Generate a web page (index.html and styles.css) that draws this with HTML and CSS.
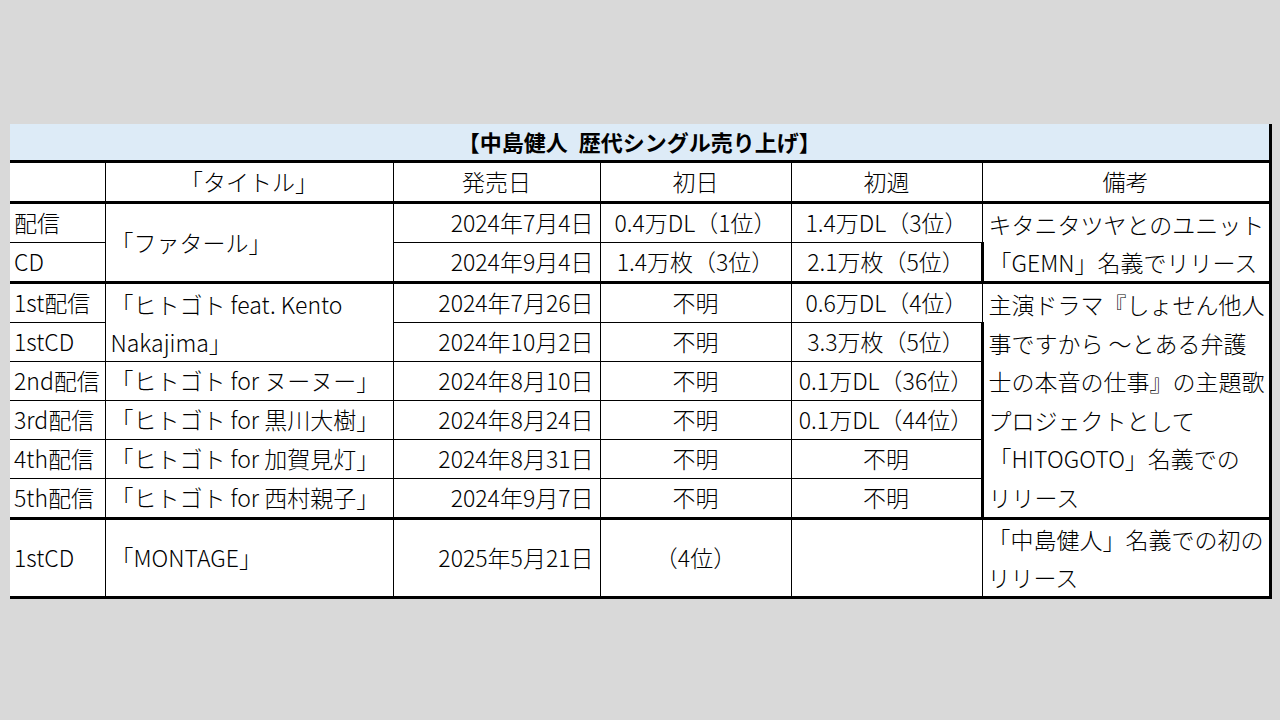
FILE: index.html
```html
<!DOCTYPE html>
<html lang="ja">
<head>
<meta charset="utf-8">
<title>中島健人 歴代シングル売り上げ</title>
<link rel="stylesheet" href="styles.css">
</head>
<body>
<div class="wrap">
<table class="sales">
<colgroup>
<col class="c-kind"><col class="c-title"><col class="c-date"><col class="c-day"><col class="c-week"><col class="c-note">
</colgroup>
<tr class="row-caption"><th colspan="6">【中島健人&ensp;歴代シングル売り上げ】</th></tr>
<tr class="row-head">
<td></td><td class="center">「タイトル」</td><td class="center">発売日</td><td class="center">初日</td><td class="center">初週</td><td class="center">備考</td>
</tr>
<tr class="thick">
<td>配信</td>
<td rowspan="2">「ファタール」</td>
<td class="date">2024年7月4日</td>
<td class="center">0.4万DL（1位）</td>
<td class="center">1.4万DL（3位）</td>
<td rowspan="2" class="note note-short">キタニタツヤとのユニット<br>「GEMN」名義でリリース</td>
</tr>
<tr>
<td>CD</td>
<td class="date">2024年9月4日</td>
<td class="center">1.4万枚（3位）</td>
<td class="center">2.1万枚（5位）</td>
</tr>
<tr class="thick">
<td>1st配信</td>
<td rowspan="2" class="wrapname">「ヒトゴト feat. Kento<br>Nakajima」</td>
<td class="date">2024年7月26日</td>
<td class="center">不明</td>
<td class="center">0.6万DL（4位）</td>
<td rowspan="6" class="note note-long">主演ドラマ『しょせん他人<br>事ですから ～とある弁護<br>士の本音の仕事』の主題歌<br>プロジェクトとして<br>「HITOGOTO」名義での<br>リリース</td>
</tr>
<tr>
<td>1stCD</td>
<td class="date">2024年10月2日</td>
<td class="center">不明</td>
<td class="center">3.3万枚（5位）</td>
</tr>
<tr>
<td>2nd配信</td>
<td>「ヒトゴト for ヌーヌー」</td>
<td class="date">2024年8月10日</td>
<td class="center">不明</td>
<td class="center">0.1万DL（36位）</td>
</tr>
<tr>
<td>3rd配信</td>
<td>「ヒトゴト for 黒川大樹」</td>
<td class="date">2024年8月24日</td>
<td class="center">不明</td>
<td class="center">0.1万DL（44位）</td>
</tr>
<tr>
<td>4th配信</td>
<td>「ヒトゴト for 加賀見灯」</td>
<td class="date">2024年8月31日</td>
<td class="center">不明</td>
<td class="center">不明</td>
</tr>
<tr>
<td>5th配信</td>
<td>「ヒトゴト for 西村親子」</td>
<td class="date">2024年9月7日</td>
<td class="center">不明</td>
<td class="center">不明</td>
</tr>
<tr class="thick row-last">
<td>1stCD</td>
<td>「MONTAGE」</td>
<td class="date">2025年5月21日</td>
<td class="center">（4位）</td>
<td></td>
<td class="note note-short">「中島健人」名義での初の<br>リリース</td>
</tr>
</table>
</div>
</body>
</html>
```

FILE: styles.css
```css
html, body {
  margin: 0;
  padding: 0;
}
body {
  background: #d9d9d9;
  font-family: "Noto Sans CJK JP", "Noto Sans", sans-serif;
  color: #000;
  width: 1280px;
  height: 720px;
  overflow: hidden;
}
.wrap {
  padding: 124px 10px 0 10px;
}
.sales {
  border-collapse: collapse;
  table-layout: fixed;
  width: 1260px;
  background: #fff;
}
.c-kind { width: 95px; }
.c-title { width: 288px; }
.c-date { width: 207px; }
.c-day { width: 191px; }
.c-week { width: 191px; }
.c-note { width: 288px; }

.sales td {
  border: 1px solid #000;
  padding: 0 5px 2px 5px;
  font-size: 23px;
  font-weight: 300;
  line-height: 36px;
  height: 36px;
  white-space: nowrap;
  vertical-align: middle;
  text-align: left;
  overflow: hidden;
}
.sales tr > td:first-child {
  border-left: none;
  padding-left: 4px;
}
.sales tr > td:last-child {
  border-right: 3px solid #000;
}
.row-caption th {
  background: #ddebf7;
  font-weight: bold;
  font-size: 22px;
  line-height: 35px;
  height: 35px;
  padding: 0 0 1px 0;
  border-right: 3px solid #000;
  border-bottom: 3px solid #000;
  text-align: center;
}
.row-head td {
  height: 35px;
}
.sales tr.thick > td {
  border-top: 3px solid #000;
}
.sales .center {
  text-align: center;
}
.sales .date {
  text-align: right;
  padding-right: 6px;
}
.sales .note {
  line-height: 39px;
  vertical-align: middle;
  padding-bottom: 0;
}
.sales .note-short {
  line-height: 38px;
}
.sales .note-long {
  line-height: 38.5px;
}
.sales .wrapname {
  line-height: 38px;
  padding-bottom: 0;
}
.row-last td {
  height: 69px;
  border-bottom: 3px solid #000;
}
```
